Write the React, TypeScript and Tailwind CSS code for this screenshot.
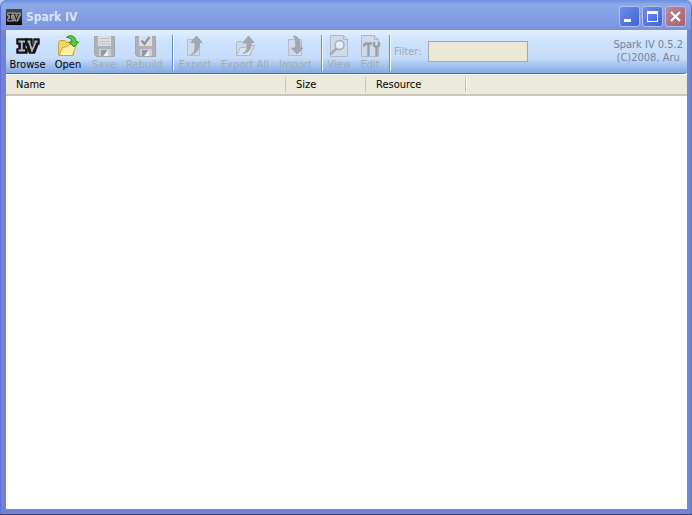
import React, { useState } from 'react';

const columns = [
    { name: 'Name', width: 'w-[280px]' },
    { name: 'Size', width: 'w-20' },
    { name: 'Resource', width: 'w-[100px]' },
];

const IVLogo = ({ className, outline, fill }: { className: string; outline: string; fill: string }) => (
    <svg className={className} viewBox="0 0 24 18" aria-hidden="true">
        <g fill={outline} stroke={outline} strokeWidth="1.500" strokeLinejoin="round">
            <path d="M1 2h10v5H9v5h2v4H1v-4h2V7H1z" />
            <path d="M10 2h6v5l1.500 4L18 7V2h5v5h-1l-3.500 9h-5L10.500 7H10z" />
        </g>
        <path d="M2.500 4.500H9M5.800 4.500v9M2.500 13.500H9M11.500 4.500h3M18.500 4.500h3M13 4.500l3 9 4-9" fill="none" stroke={fill} strokeWidth="1.800" />
    </svg>
);

const OpenIcon = () => (
    <svg className="w-6 h-6" viewBox="0 0 24 24" aria-hidden="true">
        <path d="M2.500 21V8.500l1.500-2h5l1.500 2h7V21z" fill="#f3d66a" stroke="#c9a22f" />
        <path d="M3 21.500l3.500-8 5-1 1.500-2h7.500l-4 11z" fill="#fff2a2" stroke="#cda636" />
        <path d="M10.500 3.500C13 .500 20 1 20 8h2.500L18 13l-5-5h3c0-3-2-4.500-5.500-4.500z" fill="#55cf3c" stroke="#228a1d" />
    </svg>
);

const DiskIcon = ({ checked = false }: { checked?: boolean }) => (
    <svg className="w-6 h-6" viewBox="0 0 24 24" aria-hidden="true">
        <path d="M2.500 2.500h20v20H4.500l-2-2z" fill="#adb2b9" stroke="#a1a7af" />
        <path d="M6 2h13v10H6z" fill="#dbdfe4" />
        {checked ? (
            <path d="M8.500 6.500l3 3.500 5-7" fill="none" stroke="#8d9299" strokeWidth="2.200" />
        ) : (
            <path d="M7 4.500h11M7 7.500h11M7 10h11" stroke="#bdc1c7" />
        )}
        <path d="M7 15h12v7H7z" fill="#ccd0d5" />
        <path d="M9 16h6l-2 6H9z" fill="#9298a0" />
        <path d="M11 22l5-6v6z" fill="#eef0f2" />
    </svg>
);

const ExportIcon = () => (
    <svg className="w-6 h-6" viewBox="0 0 24 24" aria-hidden="true">
        <path d="M4.500 5.500h12v16h-12z" fill="#d0dae8" stroke="#b3bdca" />
        <path d="M8 20.500c4-2 4.500-6 4-12H8L13.500 2 19 8.500h-3c.500 6-2 11-8 12z" fill="#a3a9b1" stroke="#969ca5" strokeWidth=".8" />
    </svg>
);

const ExportAllIcon = () => (
    <svg className="w-6 h-6" viewBox="0 0 24 24" aria-hidden="true">
        <path d="M3.500 21V8.500l1.500-1h4l2 2h7V21z" fill="#cdd7e5" stroke="#b3bbc6" />
        <path d="M3.500 21.500l4-8h5l2-2h7l-5 10z" fill="#dae4f0" stroke="#b0b8c3" />
        <path d="M10 19.500c4-2 4.500-5 4-11h-4L15.500 2 21 8.500h-3c.500 6-2 10-8 11z" fill="#a3a9b1" stroke="#969ca5" strokeWidth=".8" />
    </svg>
);

const ImportIcon = () => (
    <svg className="w-6 h-6" viewBox="0 0 24 24" aria-hidden="true">
        <path d="M4.500 5.500h13v16h-13z" fill="#d0dae8" stroke="#b3bdca" />
        <path d="M9.500 2c5 0 7 5 6.500 12h3l-6 6-5.500-6h4c.500-5 .500-9-2-12z" fill="#a3a9b1" stroke="#969ca5" strokeWidth=".8" />
    </svg>
);

const ViewIcon = () => (
    <svg className="w-6 h-6" viewBox="0 0 24 24" aria-hidden="true">
        <path d="M3.500 1.500h13l4 4v17h-17z" fill="#d0dae8" stroke="#aeb8c5" />
        <path d="M16.500 1.500v4h4" fill="none" stroke="#aeb8c5" />
        <path d="M9.500 14.500L3 20.500" stroke="#a5abb4" strokeWidth="2.500" />
        <circle cx="12.500" cy="11" r="4.500" fill="#e6eef7" stroke="#a5abb4" strokeWidth="1.400" />
    </svg>
);

const EditIcon = () => (
    <svg className="w-6 h-6" viewBox="0 0 24 24" aria-hidden="true">
        <path d="M3.500 1.500h13l4 4v17h-17z" fill="#d0dae8" stroke="#aeb8c5" />
        <path d="M16.500 1.500v4h4" fill="none" stroke="#aeb8c5" />
        <path d="M6 12.500c0-2 1-3 3-3h5M10.500 10v12" fill="none" stroke="#989ea7" strokeWidth="2.400" />
        <path d="M16 8v3.500l2 1.500 3-1.500V8M18.500 13v9" fill="none" stroke="#989ea7" strokeWidth="2.400" />
    </svg>
);

type ToolButtonProps = {
    label: string;
    width: string;
    disabled?: boolean;
    children: React.ReactNode;
};

const ToolButton = ({ label, width, disabled, children }: ToolButtonProps) => (
    <button
        type="button"
        disabled={disabled}
        className={`${width} flex flex-col items-center shrink-0 text-black disabled:text-[#a5a9ad]`}
    >
        <span className="h-[25px] flex items-center justify-center">{children}</span>
        <span className="leading-[14px] whitespace-nowrap">{label}</span>
    </button>
);

const Separator = () => <div className="ml-1 mt-0.5 h-9 w-0.5 shrink-0 border-l border-[#6a8ccb] bg-[#f1f9ff]" />;

const windowButton = 'size-[21px] flex items-center justify-center rounded-[3px] border border-[#b0c0ee]';

const App = () => {
    const [filter, setFilter] = useState('');

    return (
        <div className="min-h-screen flex flex-col bg-linear-to-b from-[#b9cdf2] from-30% to-[#3c4560] to-40% text-[11px] font-['DejaVu_Sans_Condensed','DejaVu_Sans',sans-serif]">
            <div className="grow flex flex-col rounded-t-[7px] border-x border-[#5f6fd0] bg-[#7183d6] mb-px">
                <header className="h-[30px] flex items-center px-[5px] pt-[3px] rounded-t-[7px] bg-linear-to-b from-[#6d8de0] via-[#8ca9e8] via-15% to-[#7a93df]">
                    <span className="size-4 flex items-center justify-center bg-linear-to-b from-[#4a4a4a] to-[#090909]">
                        <IVLogo className="w-3.5 h-3" outline="#a0a0a0" fill="#1a1a1a" />
                    </span>
                    <h1 className="ml-1 grow text-[12px] font-bold text-[#d8e4f8]">Spark IV</h1>
                    <div className="flex gap-0.5">
                        <button type="button" aria-label="Minimize" className={`${windowButton} bg-linear-to-br from-[#6e8de8] to-[#4262d8]`}>
                            <svg className="size-[19px]" viewBox="0 0 19 19"><path d="M4 12h7v3H4z" fill="#fff" /></svg>
                        </button>
                        <button type="button" aria-label="Maximize" className={`${windowButton} bg-linear-to-br from-[#6e8de8] to-[#4262d8]`}>
                            <svg className="size-[19px]" viewBox="0 0 19 19"><path d="M4 4h11v11H4zM5 7v7h9V7z" fill="#fff" fillRule="evenodd" /></svg>
                        </button>
                        <button type="button" aria-label="Close" className={`${windowButton} bg-linear-to-br from-[#c18694] to-[#a8606d]`}>
                            <svg className="size-[19px]" viewBox="0 0 19 19"><path d="M5 5l9 9M14 5l-9 9" stroke="#fff" strokeWidth="2.200" /></svg>
                        </button>
                    </div>
                </header>

                <div className="grow flex flex-col ml-[5px] mr-1 mb-[5px] bg-white">
                    <div className="h-11 flex items-start pt-[3px] pr-1 rounded-r-[3px] border-b border-[#4d6eac] bg-linear-[to_bottom,#e3efff,#cbe1fc_30%,#c6dcfa_65%,#82a9e3]">
                        <ToolButton label="Browse" width="w-[43px]">
                            <IVLogo className="w-6 h-[18px]" outline="#151515" fill="#b4bac2" />
                        </ToolButton>
                        <ToolButton label="Open" width="w-[38px]"><OpenIcon /></ToolButton>
                        <ToolButton label="Save" width="w-[34px]" disabled><DiskIcon /></ToolButton>
                        <ToolButton label="Rebuild" width="w-[47px]" disabled><DiskIcon checked /></ToolButton>
                        <Separator />
                        <ToolButton label="Export" width="w-[42px]" disabled><ExportIcon /></ToolButton>
                        <ToolButton label="Export All" width="w-[58px]" disabled><ExportAllIcon /></ToolButton>
                        <ToolButton label="Import" width="w-[43px]" disabled><ImportIcon /></ToolButton>
                        <Separator />
                        <ToolButton label="View" width="w-8" disabled><ViewIcon /></ToolButton>
                        <ToolButton label="Edit" width="w-[30px]" disabled><EditIcon /></ToolButton>
                        <Separator />
                        <label htmlFor="filter" className="w-[37px] pl-[3px] pt-3 leading-[14px] shrink-0 text-[#a5a9ad]">Filter:</label>
                        <input
                            id="filter"
                            type="text"
                            value={filter}
                            onChange={(e) => setFilter(e.target.value)}
                            disabled
                            className="mt-2 h-[21px] w-[100px] px-1 border border-[#a5a99f] bg-[#ebe8d8]"
                        />
                        <p className="ml-auto pt-[5px] leading-[13px] text-center text-[#74839c] whitespace-nowrap">
                            Spark IV 0.5.2<br />(C)2008, Aru
                        </p>
                    </div>

                    <table className="w-full table-fixed border-collapse mt-px">
                        <thead>
                            <tr className="h-5 border-b-2 border-[#cbc7b8] bg-[#ebeadb]">
                                {columns.map((column) => (
                                    <th key={column.name} scope="col" className={`${column.width} p-0 font-normal text-left`}>
                                        <span className="block my-0.5 pl-2.5 h-[15px] leading-[16px] border-r border-[#c5c2b2]">{column.name}</span>
                                    </th>
                                ))}
                                <td className="p-0"><span className="block h-[15px] border-l border-white" /></td>
                            </tr>
                        </thead>
                    </table>
                </div>
            </div>
        </div>
    );
};

export default App;
